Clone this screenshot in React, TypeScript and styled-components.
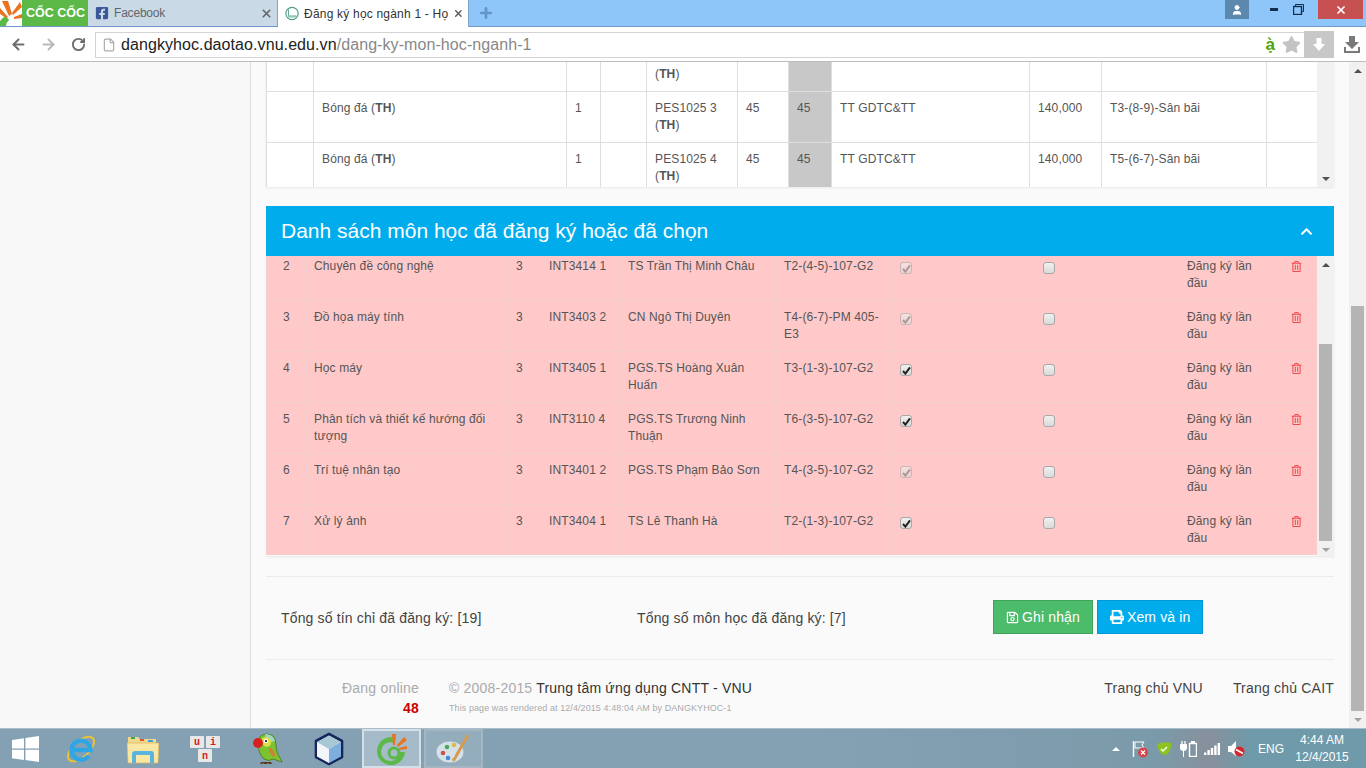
import React from 'react';
import styled, { createGlobalStyle } from 'styled-components';
import { FaChevronUp, FaFacebookSquare, FaPrint, FaRegSave, FaRegTrashAlt, FaStar } from 'react-icons/fa';
import { ArrowLeft, ArrowRight, File, Plus, RotateCw, User, X } from 'lucide-react';

const GlobalStyle = createGlobalStyle`
  html, body {
    margin: 0;
    height: 768px;
    overflow: hidden;
    font-family: 'Liberation Sans', Arial, sans-serif;
    color: #555;
  }
  * { box-sizing: border-box; }
`;

const Screen = styled.div`
  width: 1366px;
  height: 768px;
  display: flex;
  flex-direction: column;
`;

/* ---- browser frame ---- */
const TabStrip = styled.div`
  height: 27px;
  display: flex;
  background: #8ec6fa;
  border-bottom: 1px solid #6f9cc6;
`;

const BrandTab = styled.div`
  width: 88px;
  display: flex;
  align-items: center;
  background: #5cb947;
  color: #fff;
  font-size: 12.5px;
  font-weight: bold;
  white-space: nowrap;
  gap: 4px;
`;

const Tab = styled.div<{ $active?: boolean }>`
  width: ${(p) => (p.$active ? '191px' : '190px')};
  display: flex;
  align-items: center;
  gap: 5px;
  padding: 0 4px 0 7px;
  font-size: 12px;
  letter-spacing: ${(p) => (p.$active ? '0.2px' : '-0.2px')};
  background: ${(p) => (p.$active ? '#fff' : '#c9d9e6')};
  color: ${(p) => (p.$active ? '#333' : '#666')};
  border-right: 1px solid #7ea6ca;
  height: ${(p) => (p.$active ? '27px' : '26px')};
`;

const TabTitle = styled.span`
  flex: 1;
  white-space: nowrap;
`;

const NewTab = styled.div`
  width: 34px;
  display: flex;
  align-items: center;
  justify-content: center;
  color: #5f95c9;
`;

const WindowControls = styled.div`
  margin-left: auto;
  display: flex;
  align-items: flex-start;
  height: 19px;
  padding-right: 3px;
`;

const ProfileButton = styled.div`
  width: 24px;
  height: 19px;
  margin-right: 12px;
  background: #5c88ae;
  color: #fff;
  display: flex;
  align-items: center;
  justify-content: center;
`;

const WindowButton = styled.div`
  width: 25px;
  height: 19px;
  display: flex;
  align-items: center;
  justify-content: center;
`;

const CloseButton = styled.div`
  width: 45px;
  height: 19px;
  margin-left: 7px;
  background: #c75050;
  color: #fff;
  display: flex;
  align-items: center;
  justify-content: center;
`;

const Toolbar = styled.div`
  height: 35px;
  display: flex;
  align-items: center;
  background: #fff;
  border-bottom: 1px solid #bdbdbd;
  padding: 1px 0 0 3px;
`;

const NavButton = styled.div<{ $off?: boolean }>`
  width: 30px;
  display: flex;
  justify-content: center;
  color: ${(p) => (p.$off ? '#b9b9b9' : '#6d6d6d')};
`;

const AddressBar = styled.div`
  margin-left: 2px;
  width: 1239px;
  height: 26px;
  display: flex;
  align-items: center;
  border: 1px solid #d3d3d3;
  padding-left: 6px;
  color: #aaa;
`;

const UrlText = styled.div`
  margin-left: 5px;
  font-size: 16px;
  letter-spacing: 0.08px;
  color: #222;
  white-space: nowrap;
`;

const UrlPath = styled.span`
  color: #888;
`;

const AddressTools = styled.div`
  margin-left: auto;
  display: flex;
  align-items: center;
`;

const ToneMark = styled.span`
  color: #4ea40c;
  font-weight: bold;
  font-size: 17px;
  margin-right: 7px;
`;

const SaveBadge = styled.div`
  width: 30px;
  height: 27px;
  margin-left: 3px;
  margin-right: -1px;
  background: #c8c8c8;
  display: flex;
  align-items: center;
  justify-content: center;
`;

const ToolbarEnd = styled.div`
  flex: 1;
  display: flex;
  justify-content: center;
  padding-left: 4px;
`;

/* ---- page ---- */
const Body = styled.div`
  flex: 1;
  display: flex;
  min-height: 0;
`;

const Sidebar = styled.aside`
  width: 251px;
  background: #f8f8f8;
  border-right: 1px solid #dcdcdc;
`;

const Main = styled.main`
  width: 1098px;
  padding: 0 15px;
  background: #fafafa;
  display: flex;
  flex-direction: column;
  overflow: hidden;
`;

const ScrollPanel = styled.div<{ $h: number; $gap?: number }>`
  height: ${(p) => p.$h}px;
  display: flex;
  flex: none;
  margin-bottom: ${(p) => p.$gap ?? 0}px;
  box-shadow: 0 1px 2px rgba(0, 0, 0, 0.08);
`;

const Rows = styled.div`
  width: 1051px;
  overflow: hidden;
  font-size: 12px;
  line-height: 17px;
  letter-spacing: 0.13px;
`;

const CourseRow = styled.div<{ $h: number }>`
  height: ${(p) => p.$h}px;
  display: grid;
  grid-template-columns: 47px 253px 34px 46px 91px 51px 43px 198px 72px 165px 51px;
  background: #fff;
`;

const CourseCell = styled.div<{ $full?: boolean; $clipped?: boolean }>`
  border-left: 1px solid #dedede;
  border-top: ${(p) => (p.$clipped ? 'none' : '1px solid #dedede')};
  padding: ${(p) => (p.$clipped ? 4 : 8)}px 8px 0;
  background: ${(p) => (p.$full ? '#c8c8c8' : 'transparent')};
`;

const PickedRow = styled.div<{ $h: number }>`
  height: ${(p) => p.$h}px;
  display: grid;
  grid-template-columns: 40px 202px 33px 79px 156px 116px 143px 144px 100px 38px;
  background: #ffc9c9;
`;

const PickedCell = styled.div<{ $first?: boolean; $center?: boolean }>`
  border-left: 1px solid #f2d0d0;
  border-top: ${(p) => (p.$first ? 'none' : '1px solid #f2d0d0')};
  padding: ${(p) => (p.$first ? '2px' : '8px')} 7px 0;
  text-align: ${(p) => (p.$center ? 'center' : 'left')};
`;

const CheckMark = styled.span<{ $locked?: boolean }>`
  width: 12px;
  height: 12px;
  margin-top: 4px;
  display: flex;
  align-items: center;
  justify-content: center;
  border: 1px solid #a8a8a8;
  border-radius: 3px;
  background: linear-gradient(#f0f0f0, #dadada);
  opacity: ${(p) => (p.$locked ? 0.6 : 1)};
`;

const TrashLink = styled.span`
  color: #f0494d;
  font-size: 11px;
  display: block;
  padding: 2px 0 0 4px;
`;

const ScrollTrack = styled.div`
  width: 17px;
  flex: none;
  background: #f1f1f1;
  display: flex;
  flex-direction: column;
`;

const ArrowBox = styled.div`
  height: 17px;
  flex: none;
  display: flex;
  align-items: center;
  justify-content: center;
`;

const Triangle = styled.span<{ $down?: boolean; $muted?: boolean }>`
  border-left: 4px solid transparent;
  border-right: 4px solid transparent;
  border-bottom: ${(p) => (p.$down ? 'none' : `4px solid ${p.$muted ? '#a3a3a3' : '#505050'}`)};
  border-top: ${(p) => (p.$down ? `4px solid ${p.$muted ? '#a3a3a3' : '#505050'}` : 'none')};
`;

const TrayCaret = styled.span`
  border-left: 4px solid transparent;
  border-right: 4px solid transparent;
  border-bottom: 4px solid #fff;
`;

const Thumb = styled.div<{ $top: number; $h: number }>`
  margin: ${(p) => p.$top}px 2px 0;
  height: ${(p) => p.$h}px;
  flex: none;
  background: #b4b4b4;
`;

const TrackFill = styled.div`
  flex: 1;
`;

const SectionHeader = styled.h2`
  flex: none;
  margin: 0;
  height: 50px;
  padding: 0 21px 0 15px;
  display: flex;
  align-items: center;
  justify-content: space-between;
  background: #00acec;
  color: #fff;
  font-size: 21px;
  font-weight: normal;
`;

const Divider = styled.hr<{ $top?: number }>`
  flex: none;
  width: 100%;
  margin: ${(p) => p.$top ?? 0}px 0 0;
  border: 0;
  border-top: 1px solid #ececec;
`;

const Summary = styled.div`
  flex: none;
  height: 82px;
  padding-left: 15px;
  display: grid;
  grid-template-columns: 356px 356px auto;
  align-items: center;
  font-size: 14px;
  letter-spacing: 0.16px;
  color: #444;
`;

const SummaryActions = styled.div`
  display: flex;
  gap: 4px;
  margin-top: -2px;
`;

const ActionButton = styled.button<{ $tone: 'green' | 'blue' }>`
  height: 34px;
  padding: 0 12px;
  display: flex;
  align-items: center;
  gap: 3px;
  font: 14px 'Liberation Sans', Arial, sans-serif;
  letter-spacing: 0.14px;
  color: #fff;
  background: ${(p) => (p.$tone === 'green' ? '#4cbb6a' : '#00acec')};
  border: 1px solid ${(p) => (p.$tone === 'green' ? '#3fa35b' : '#0098d4')};
  border-radius: 0;
`;

const Footer = styled.footer`
  flex: none;
  display: flex;
  padding-top: 20px;
  font-size: 14px;
  line-height: 17px;
  letter-spacing: 0.2px;
`;

const OnlineBox = styled.div`
  width: 153px;
  margin-right: 30px;
  text-align: right;
  color: #aaa;
`;

const OnlineCount = styled.div`
  margin-top: 3px;
  color: #c90000;
  font-weight: bold;
`;

const Credits = styled.div`
  color: #aaa;
`;

const CreditOwner = styled.span`
  color: #333;
`;

const RenderNote = styled.div`
  margin-top: 5px;
  font-size: 9px;
  line-height: 13px;
  letter-spacing: 0.08px;
`;

const FooterLinks = styled.nav`
  margin-left: auto;
  display: flex;
  gap: 30px;
  color: #444;
`;

/* ---- taskbar ---- */
const Taskbar = styled.div`
  height: 40px;
  display: flex;
  align-items: center;
  border-top: 1px solid #a9bdca;
  background: linear-gradient(90deg, #84a1b4 0%, #84a1b4 60%, #7b9aa9 85%, #87909c 88.5%, #6f9aa9 91.5%, #6f9aa9 100%);
`;

const StartSlot = styled.div`
  width: 50px;
  height: 100%;
  display: flex;
  align-items: center;
  justify-content: center;
`;

const AppSlot = styled.div<{ $open?: 'active' | 'running' }>`
  height: 39px;
  display: flex;
  align-items: center;
  justify-content: center;
  background: ${(p) => (p.$open === 'active' ? 'rgba(255,255,255,.28)' : p.$open === 'running' ? 'rgba(255,255,255,.13)' : 'transparent')};
  border: ${(p) => (p.$open === 'active' ? '2px solid #d5e0e6' : p.$open === 'running' ? '2px solid #a3b6c2' : 'none')};
  margin: ${(p) => (p.$open ? '0 1.5px' : '0')};
  width: ${(p) => (p.$open ? '59px' : '62px')};
`;

const Tray = styled.div`
  margin-left: auto;
  display: flex;
  align-items: center;
  color: #fff;
  font-size: 12px;
  padding-right: 4px;
`;

const TrayIcon = styled.div`
  width: 24px;
  display: flex;
  justify-content: center;
`;

const Lang = styled.div`
  margin-left: 10px;
  width: 24px;
`;

const Clock = styled.div`
  width: 80px;
  text-align: center;
  line-height: 17px;
`;

const BrandMark = () => (
  <svg width="22" height="26" viewBox="0 0 22 26">
    <rect width="22" height="26" fill="#fff" />
    <path d="M0 21 a14 14 0 0 1 6 -5 l3 4 a9 9 0 0 0 -3 6 H0z" fill="#5cb947" />
    <path d="M2 1 h6 l4 13 -3 2z" fill="#e9731f" />
    <path d="M20 2 l2 5 -9 8 -1 -2z" fill="#e9731f" />
    <path d="M0 8 l8 9 -2 1 -6 -4z" fill="#e9731f" />
    <path d="M22 14 v4 l-8 1 0 -2z" fill="#e9731f" />
  </svg>
);

const SiteFavicon = () => (
  <svg width="17" height="17" viewBox="0 0 16 16">
    <circle cx="8" cy="8" r="7" fill="#fff" stroke="#4d9c83" strokeWidth="1.3" />
    <path d="M4 3.5 v8 h9" fill="none" stroke="#4d9c83" />
    <rect x="4" y="10" width="9" height="2.5" fill="#8cc9b4" />
  </svg>
);

const DownloadIcon = () => (
  <svg width="16" height="17" viewBox="0 0 16 17">
    <path d="M5 0 h6 v6 h4 l-7 7 -7 -7 h4z" fill="#7a7a7a" />
    <path d="M0 11 h2 v4 h12 v-4 h2 v6 H0z" fill="#7a7a7a" />
  </svg>
);

const WhiteDown = () => (
  <svg width="12" height="13" viewBox="0 0 12 13">
    <path d="M3.5 0 h5 v6 h3.5 l-6 7 -6 -7 h3.5z" fill="#fff" />
  </svg>
);

const MinimizeGlyph = () => (
  <svg width="8" height="3"><rect width="8" height="3" fill="#12304d" /></svg>
);

const RestoreGlyph = () => (
  <svg width="11" height="11" viewBox="0 0 11 11">
    <path d="M2.5 2.5 V.5 h8 v7 h-2" fill="none" stroke="#12304d" />
    <rect x=".5" y="2.5" width="8" height="8" fill="none" stroke="#12304d" strokeWidth="1.4" />
  </svg>
);

const TickGlyph = ({ light }: { light?: boolean }) => (
  <svg width="9" height="9" viewBox="0 0 9 9">
    <path d="M1 5 l2.4 2.6 L8 1.4" fill="none" stroke={light ? '#777' : '#222'} strokeWidth="2" />
  </svg>
);

const WindowsLogo = () => (
  <svg width="27" height="26" viewBox="0 0 27 26">
    <path d="M0 4 L12 2.2 V12.4 H0z M13.4 2 L27 0 V12.4 H13.4z M0 13.8 H12 V24 L0 22.2z M13.4 13.8 H27 V26 L13.4 24z" fill="#fff" />
  </svg>
);

const IeLogo = () => (
  <svg width="32" height="34" viewBox="0 0 32 34">
    <ellipse cx="16" cy="17" rx="16" ry="8" transform="rotate(-42 16 17)" fill="none" stroke="#e8c23a" strokeWidth="2" />
    <path d="M7.5 18 h18 A9.5 9.5 0 1 0 23.5 24" fill="none" stroke="#2ea6e6" strokeWidth="4.4" />
  </svg>
);

const FolderLogo = () => (
  <svg width="32" height="30" viewBox="0 0 32 30">
    <path d="M1 3 h10 l2 2 h16 v7 H1z" fill="#f0d98a" />
    <rect x="4" y="3" width="4" height="2" fill="#3aa655" />
    <rect x="13" y="5" width="4" height="2" fill="#d8563a" />
    <rect x="21" y="6" width="5" height="2" fill="#4a9ad8" />
    <path d="M0 9 h32 l-1 20 H1z" fill="#fbe7a4" stroke="#d9b65c" strokeWidth=".7" />
    <path d="M5 29 v-9 q0 -3 3 -3 h16 q3 0 3 3 v9 h-4 v-8 H9 v8z" fill="#5ab4de" />
  </svg>
);

const UniKeys = () => (
  <svg width="32" height="30" viewBox="0 0 32 30" fontFamily="Liberation Mono, monospace" fontWeight="bold" fontSize="10" textAnchor="middle" fill="#d02020">
    <rect x="1" y="2" width="14" height="12" rx="1" fill="#e8e8e8" />
    <rect x="17" y="2" width="14" height="12" rx="1" fill="#e8e8e8" />
    <rect x="9" y="15" width="14" height="13" rx="1" fill="#e8e8e8" />
    <text x="8" y="11">u</text>
    <text x="24" y="11">i</text>
    <text x="16" y="25">n</text>
  </svg>
);

const ParrotLogo = () => (
  <svg width="32" height="34" viewBox="0 0 32 34">
    <path d="M7 12 q0 -10 9 -10 q9 0 9 11 q0 6 2 9 l4 8 -9 -3 q-4 3 -9 0 q-6 -6 -6 -15z" fill="#7cc22e" stroke="#3d6b16" strokeWidth=".7" />
    <path d="M14 2 q8 0 10 7 l-8 2z" fill="#9fd6c8" />
    <path d="M11 6 q6 -3 9 2 q1 6 -4 7 q-5 0 -5 -9z" fill="#d6e04a" />
    <circle cx="7" cy="11" r="5" fill="#d92020" />
    <circle cx="15" cy="9" r="2.2" fill="#fff" />
    <circle cx="15" cy="9" r="1.1" fill="#111" />
    <path d="M18 15 q6 3 6 10 q-6 -2 -6 -10z" fill="#d97a35" />
    <path d="M10 30 h10 l1 2 h-3 l-1 -1 -1 1 h-3 l-1 -1 -1 1 h-2z" fill="#5a3a1a" />
  </svg>
);

const CubeLogo = () => (
  <svg width="32" height="34" viewBox="0 0 32 34">
    <path d="M16 2 L29 9 V25 L16 32 L3 25 V9z" fill="#dbe9f4" stroke="#16265a" strokeWidth="2.6" strokeLinejoin="round" />
    <path d="M16 17 L28 10 V24.5 L16 31z" fill="#7eaede" />
    <path d="M16 17 L4 10 V24.5 L16 31z" fill="#f2f6fa" />
    <path d="M16 3.5 L28 10 16 17 4 10z" fill="#a9c8d6" />
  </svg>
);

const CocCocLogo = () => (
  <svg width="34" height="34" viewBox="0 0 34 34">
    <path d="M22 6 A14 14 0 1 0 31 20 h-5 A9.5 9.5 0 1 1 19 10.5z" fill="#5cb947" />
    <circle cx="20" cy="21" r="5" fill="none" stroke="#5cb947" strokeWidth="3" />
    <path d="M18 2 h4 l-1 11 -2 0z" fill="#e9731f" />
    <path d="M30 5 l3 3 -9 7 -1 -2z" fill="#e9731f" />
    <path d="M33 14 v3 l-8 1 v-2z" fill="#e9731f" />
  </svg>
);

const PaintLogo = () => (
  <svg width="34" height="32" viewBox="0 0 34 32">
    <ellipse cx="14" cy="19" rx="14" ry="11" fill="#d6e2ea" stroke="#93a9b6" strokeWidth=".8" />
    <circle cx="7" cy="20" r="2.3" fill="#d05050" />
    <circle cx="11" cy="14" r="2.3" fill="#4fa85c" />
    <circle cx="18" cy="12" r="2.3" fill="#e3b94a" />
    <circle cx="12" cy="25" r="2.3" fill="#4a8ad0" />
    <path d="M31 1 l2 2 -10 18 -4 7 q-3 1 -3 -2 q3 -2 4 -6z" fill="#d99a4a" />
  </svg>
);

const FlagAlert = () => (
  <svg width="16" height="18" viewBox="0 0 16 18">
    <path d="M1.5 1 V17" stroke="#fff" strokeWidth="1.4" />
    <path d="M3 2 h9 l-2 3 2 3 H3z" fill="none" stroke="#fff" />
    <circle cx="11" cy="12.5" r="5" fill="#d6434a" />
    <path d="M9 10.5 l4 4 m0 -4 l-4 4" stroke="#fff" strokeWidth="1.3" />
  </svg>
);

const LeafIcon = () => (
  <svg width="16" height="14" viewBox="0 0 16 14">
    <path d="M1 2 Q8 -1 15 1 Q16 9 10 13 Q3 14 1 2z" fill="#8dc21f" />
    <path d="M5 7 l2 2 4 -4" fill="none" stroke="#fff" strokeWidth="1.4" />
  </svg>
);

const PlugBattery = () => (
  <svg width="17" height="16" viewBox="0 0 17 16" fill="none" stroke="#fff">
    <path d="M2 0 v3 M5 0 v3" strokeWidth="1.3" />
    <path d="M0.5 3.5 h6 v4 q0 2 -3 2 q-3 0 -3 -2z M3.5 9 v7" fill="#fff" />
    <rect x="9.5" y="2.5" width="7" height="13" strokeWidth="1.4" />
    <rect x="11.5" y="0.5" width="3" height="2" fill="#fff" />
  </svg>
);

const SignalBars = () => (
  <svg width="16" height="12" viewBox="0 0 16 12" fill="#fff">
    <rect x="0" y="9.5" width="2.4" height="2.5" />
    <rect x="3.4" y="7" width="2.4" height="5" />
    <rect x="6.8" y="5" width="2.4" height="7" />
    <rect x="10.2" y="2.5" width="2.4" height="9.5" />
    <rect x="13.6" y="0" width="2.4" height="12" />
  </svg>
);

const MutedSpeaker = () => (
  <svg width="17" height="16" viewBox="0 0 17 16">
    <path d="M0 5 h3 l5 -5 v15 l-5 -4 H0z" fill="#fff" />
    <circle cx="11.5" cy="10.5" r="5" fill="#d6262e" />
    <path d="M8 8.5 l7 4" stroke="#fff" strokeWidth="1.6" />
  </svg>
);

const ScrollBar = ({ thumbTop, thumbHeight, mutedEnd, hideUp }: { thumbTop?: number; thumbHeight?: number; mutedEnd?: boolean; hideUp?: boolean }) => (
  <ScrollTrack>
    {!hideUp && (
      <ArrowBox>
        <Triangle />
      </ArrowBox>
    )}
    {thumbHeight ? <Thumb $top={thumbTop ?? 0} $h={thumbHeight} /> : null}
    <TrackFill />
    <ArrowBox>
      <Triangle $down $muted={mutedEnd} />
    </ArrowBox>
  </ScrollTrack>
);

type Course = { code: string; time: string };
const courses: Course[] = [
  { code: 'PES1025 3', time: 'T3-(8-9)-Sân bãi' },
  { code: 'PES1025 4', time: 'T5-(6-7)-Sân bãi' },
];

const CourseRowView = ({ course, height }: { course: Course; height: number }) => (
  <CourseRow $h={height}>
    <CourseCell />
    <CourseCell>
      Bóng đá (<b>TH</b>)
    </CourseCell>
    <CourseCell>1</CourseCell>
    <CourseCell />
    <CourseCell>
      {course.code} (<b>TH</b>)
    </CourseCell>
    <CourseCell>45</CourseCell>
    <CourseCell $full>45</CourseCell>
    <CourseCell>TT GDTC&amp;TT</CourseCell>
    <CourseCell>140,000</CourseCell>
    <CourseCell>{course.time}</CourseCell>
    <CourseCell />
  </CourseRow>
);

type Picked = { no: number; name: string; code: string; teacher: string; time: string; locked: boolean };
const picked: Picked[] = [
  { no: 2, name: 'Chuyên đề công nghệ', code: 'INT3414 1', teacher: 'TS Trần Thị Minh Châu', time: 'T2-(4-5)-107-G2', locked: true },
  { no: 3, name: 'Đồ họa máy tính', code: 'INT3403 2', teacher: 'CN Ngô Thị Duyên', time: 'T4-(6-7)-PM 405-E3', locked: true },
  { no: 4, name: 'Học máy', code: 'INT3405 1', teacher: 'PGS.TS Hoàng Xuân Huấn', time: 'T3-(1-3)-107-G2', locked: false },
  { no: 5, name: 'Phân tích và thiết kế hướng đối tượng', code: 'INT3110 4', teacher: 'PGS.TS Trương Ninh Thuận', time: 'T6-(3-5)-107-G2', locked: false },
  { no: 6, name: 'Trí tuệ nhân tạo', code: 'INT3401 2', teacher: 'PGS.TS Phạm Bảo Sơn', time: 'T4-(3-5)-107-G2', locked: true },
  { no: 7, name: 'Xử lý ảnh', code: 'INT3404 1', teacher: 'TS Lê Thanh Hà', time: 'T2-(1-3)-107-G2', locked: false },
];

export default function App() {
  return (
    <Screen>
      <GlobalStyle />
      <TabStrip>
        <BrandTab>
          <BrandMark />
          CỐC CỐC
        </BrandTab>
        <Tab>
          <FaFacebookSquare size={14} color="#3b5998" />
          <TabTitle>Facebook</TabTitle>
          <X size={13} strokeWidth={3} color="#666" />
        </Tab>
        <Tab $active>
          <SiteFavicon />
          <TabTitle>Đăng ký học ngành 1 - Họ</TabTitle>
          <X size={13} strokeWidth={3} color="#555" />
        </Tab>
        <NewTab>
          <Plus size={16} strokeWidth={4} />
        </NewTab>
        <WindowControls>
          <ProfileButton>
            <User size={12} fill="#fff" />
          </ProfileButton>
          <WindowButton>
            <MinimizeGlyph />
          </WindowButton>
          <WindowButton>
            <RestoreGlyph />
          </WindowButton>
          <CloseButton>
            <X size={12} strokeWidth={3.5} />
          </CloseButton>
        </WindowControls>
      </TabStrip>
      <Toolbar>
        <NavButton>
          <ArrowLeft size={17} strokeWidth={2.8} />
        </NavButton>
        <NavButton $off>
          <ArrowRight size={17} strokeWidth={2.8} />
        </NavButton>
        <NavButton>
          <RotateCw size={15} strokeWidth={3} />
        </NavButton>
        <AddressBar>
          <File size={14} />
          <UrlText>
            dangkyhoc.daotao.vnu.edu.vn<UrlPath>/dang-ky-mon-hoc-nganh-1</UrlPath>
          </UrlText>
          <AddressTools>
            <ToneMark>ạ̀</ToneMark>
            <FaStar size={19} color="#c4c4c4" />
            <SaveBadge>
              <WhiteDown />
            </SaveBadge>
          </AddressTools>
        </AddressBar>
        <ToolbarEnd>
          <DownloadIcon />
        </ToolbarEnd>
      </Toolbar>
      <Body>
        <Sidebar />
        <Main>
          <ScrollPanel $h={125} $gap={19}>
            <Rows>
              <CourseRow $h={29}>
                <CourseCell $clipped />
                <CourseCell $clipped />
                <CourseCell $clipped />
                <CourseCell $clipped />
                <CourseCell $clipped>
                  (<b>TH</b>)
                </CourseCell>
                <CourseCell $clipped />
                <CourseCell $clipped $full />
                <CourseCell $clipped />
                <CourseCell $clipped />
                <CourseCell $clipped />
                <CourseCell $clipped />
              </CourseRow>
              <CourseRowView course={courses[0]} height={51} />
              <CourseRowView course={courses[1]} height={45} />
            </Rows>
            <ScrollBar hideUp />
          </ScrollPanel>
          <SectionHeader>
            Danh sách môn học đã đăng ký hoặc đã chọn
            <FaChevronUp size={13} />
          </SectionHeader>
          <ScrollPanel $h={300}>
            <Rows>
              {picked.map((row, i) => (
                <PickedRow key={row.no} $h={i === 0 ? 44 : 51}>
                  <PickedCell $first={i === 0} $center>
                    {row.no}
                  </PickedCell>
                  <PickedCell $first={i === 0}>{row.name}</PickedCell>
                  <PickedCell $first={i === 0}>3</PickedCell>
                  <PickedCell $first={i === 0}>{row.code}</PickedCell>
                  <PickedCell $first={i === 0}>{row.teacher}</PickedCell>
                  <PickedCell $first={i === 0}>{row.time}</PickedCell>
                  <PickedCell $first={i === 0}>
                    <CheckMark $locked={row.locked}>
                      <TickGlyph light={row.locked} />
                    </CheckMark>
                  </PickedCell>
                  <PickedCell $first={i === 0}>
                    <CheckMark />
                  </PickedCell>
                  <PickedCell $first={i === 0}>Đăng ký lần đầu</PickedCell>
                  <PickedCell $first={i === 0}>
                    <TrashLink>
                      <FaRegTrashAlt />
                    </TrashLink>
                  </PickedCell>
                </PickedRow>
              ))}
            </Rows>
            <ScrollBar thumbTop={71} thumbHeight={197} mutedEnd />
          </ScrollPanel>
          <Divider $top={20} />
          <Summary>
            <div>Tổng số tín chỉ đã đăng ký: [19]</div>
            <div>Tổng số môn học đã đăng ký: [7]</div>
            <SummaryActions>
              <ActionButton $tone="green">
                <FaRegSave size={13} /> Ghi nhận
              </ActionButton>
              <ActionButton $tone="blue">
                <FaPrint size={14} /> Xem và in
              </ActionButton>
            </SummaryActions>
          </Summary>
          <Divider />
          <Footer>
            <OnlineBox>
              Đang online
              <OnlineCount>48</OnlineCount>
            </OnlineBox>
            <Credits>
              © 2008-2015 <CreditOwner>Trung tâm ứng dụng CNTT - VNU</CreditOwner>
              <RenderNote>This page was rendered at 12/4/2015 4:48:04 AM by DANGKYHOC-1</RenderNote>
            </Credits>
            <FooterLinks>
              <span>Trang chủ VNU</span>
              <span>Trang chủ CAIT</span>
            </FooterLinks>
          </Footer>
        </Main>
        <ScrollBar thumbTop={227} thumbHeight={405} mutedEnd />
      </Body>
      <Taskbar>
        <StartSlot>
          <WindowsLogo />
        </StartSlot>
        <AppSlot>
          <IeLogo />
        </AppSlot>
        <AppSlot>
          <FolderLogo />
        </AppSlot>
        <AppSlot>
          <UniKeys />
        </AppSlot>
        <AppSlot>
          <ParrotLogo />
        </AppSlot>
        <AppSlot>
          <CubeLogo />
        </AppSlot>
        <AppSlot $open="active">
          <CocCocLogo />
        </AppSlot>
        <AppSlot $open="running">
          <PaintLogo />
        </AppSlot>
        <Tray>
          <TrayIcon>
            <TrayCaret />
          </TrayIcon>
          <TrayIcon>
            <FlagAlert />
          </TrayIcon>
          <TrayIcon>
            <LeafIcon />
          </TrayIcon>
          <TrayIcon>
            <PlugBattery />
          </TrayIcon>
          <TrayIcon>
            <SignalBars />
          </TrayIcon>
          <TrayIcon>
            <MutedSpeaker />
          </TrayIcon>
          <Lang>ENG</Lang>
          <Clock>
            4:44 AM
            <br />
            12/4/2015
          </Clock>
        </Tray>
      </Taskbar>
    </Screen>
  );
}
